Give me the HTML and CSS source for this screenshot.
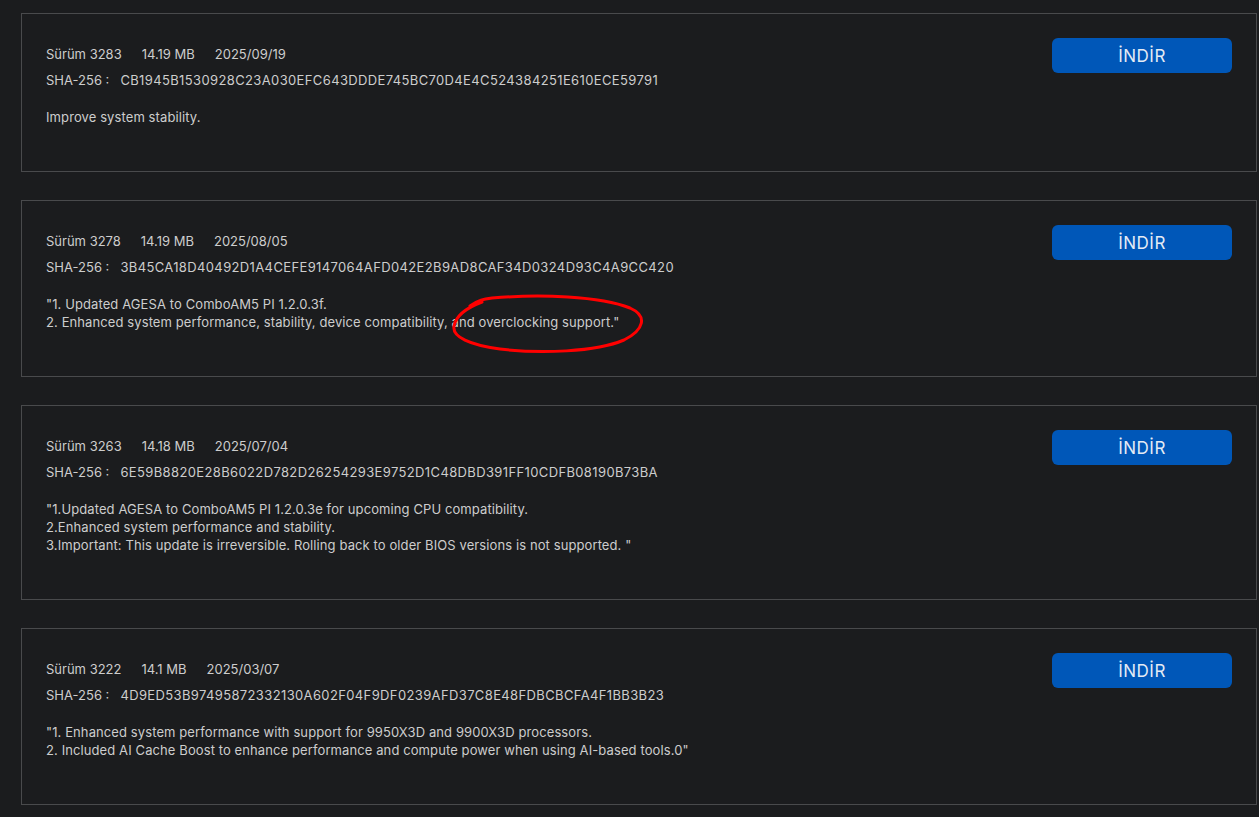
FILE: index.html
```html
<!DOCTYPE html>
<html lang="tr">
<head>
  <meta charset="UTF-8">
  <title>BIOS Sürümleri</title>
  <link rel="stylesheet" href="styles.css">
</head>
<body>
  <div class="bios-list">

    <div class="bios-item">
      <div class="bios-info">
        <div class="meta">
          <span>Sürüm 3283</span>
          <span>14.19 MB</span>
          <span>2025/09/19</span>
        </div>
        <div class="sha">SHA-256 :<span class="hash">CB1945B1530928C23A030EFC643DDDE745BC70D4E4C524384251E610ECE59791</span></div>
        <div class="desc">Improve system stability.</div>
      </div>
      <button class="download">İNDİR</button>
    </div>

    <div class="bios-item">
      <div class="bios-info">
        <div class="meta">
          <span>Sürüm 3278</span>
          <span>14.19 MB</span>
          <span>2025/08/05</span>
        </div>
        <div class="sha">SHA-256 :<span class="hash">3B45CA18D40492D1A4CEFE9147064AFD042E2B9AD8CAF34D0324D93C4A9CC420</span></div>
        <div class="desc">"1. Updated AGESA to ComboAM5 PI 1.2.0.3f.<br>2. Enhanced system performance, stability, device compatibility, and overclocking support."</div>
      </div>
      <button class="download">İNDİR</button>
    </div>

    <div class="bios-item">
      <div class="bios-info">
        <div class="meta">
          <span>Sürüm 3263</span>
          <span>14.18 MB</span>
          <span>2025/07/04</span>
        </div>
        <div class="sha">SHA-256 :<span class="hash">6E59B8820E28B6022D782D26254293E9752D1C48DBD391FF10CDFB08190B73BA</span></div>
        <div class="desc">"1.Updated AGESA to ComboAM5 PI 1.2.0.3e for upcoming CPU compatibility.<br>2.Enhanced system performance and stability.<br>3.Important: This update is irreversible. Rolling back to older BIOS versions is not supported. "</div>
      </div>
      <button class="download">İNDİR</button>
    </div>

    <div class="bios-item">
      <div class="bios-info">
        <div class="meta">
          <span>Sürüm 3222</span>
          <span>14.1 MB</span>
          <span>2025/03/07</span>
        </div>
        <div class="sha">SHA-256 :<span class="hash">4D9ED53B97495872332130A602F04F9DF0239AFD37C8E48FDBCBCFA4F1BB3B23</span></div>
        <div class="desc">"1. Enhanced system performance with support for 9950X3D and 9900X3D processors.<br>2. Included AI Cache Boost to enhance performance and compute power when using AI-based tools.0"</div>
      </div>
      <button class="download">İNDİR</button>
    </div>

  </div>

  <!-- hand-drawn red circle annotation -->
  <svg class="scribble" width="1259" height="817" viewBox="0 0 1259 817">
    <path d="M470 306 C478 300 484 299 492 298 C540 294 600 296 630 308 C648 316 644 330 624 340 C596 352 540 354 500 349 C470 345 452 337 454 326 C456 316 466 308 482 302"
          fill="none" stroke="#ff0000" stroke-width="3" stroke-linecap="round"/>
  </svg>
</body>
</html>
```

FILE: styles.css
```css
body {
  margin: 0;
  background: #1b1c1e;
  font-family: Inter, "Noto Sans", sans-serif;
  color: #cdcdcd;
  position: relative;
}

.bios-list {
  display: flex;
  flex-direction: column;
  gap: 28px;
  padding: 13px 2px 0 21px;
}

.bios-item {
  display: flex;
  justify-content: space-between;
  align-items: flex-start;
  border: 1px solid #494a4c;
  padding: 24px 24px 45px 24px;
}

.bios-info {
  padding-top: 7px;
  font-size: 13px;
  line-height: 18px;
}

.meta {
  display: flex;
  gap: 20px;
}

.sha {
  margin-top: 8px;
}

.sha .hash {
  margin-left: 11px;
  letter-spacing: 0.37px;
}

.desc {
  margin-top: 19px;
  letter-spacing: 0.1px;
}

.download {
  width: 180px;
  height: 35px;
  border: none;
  border-radius: 6px;
  background: #0057b8;
  color: #e4ebf5;
  font-family: Inter, "Noto Sans", sans-serif;
  font-size: 17px;
  letter-spacing: 0.5px;
  cursor: pointer;
}

.scribble {
  position: absolute;
  left: 0;
  top: 0;
  pointer-events: none;
}
```
